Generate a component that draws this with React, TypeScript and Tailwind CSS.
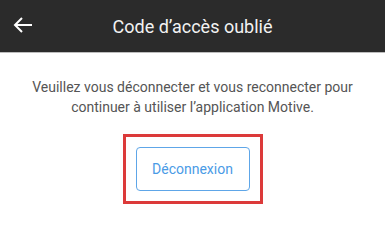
export default function App() {
  return (
    <div className="w-[385px] h-[249px] bg-white flex flex-col font-['Roboto',sans-serif]">
      {/* Header */}
      <div className="h-[52px] bg-[#2b2b2b] flex items-center relative border-b border-[#bdbdbd] box-content">
        <button type="button" className="absolute left-[11px] top-[13px] text-white" aria-label="Retour">
          <svg width="24" height="24" viewBox="0 0 24 24" fill="none" stroke="currentColor" strokeWidth="2">
            <path d="M21 12H4M11 5l-7 7 7 7" />
          </svg>
        </button>
        <h1 className="flex-1 text-center text-[18px] text-[#f2f2f2] font-normal">Code d’accès oublié</h1>
      </div>

      <div className="flex flex-col items-center">
        <p className="mt-[24px] text-[14px] leading-[20px] text-[#555555] text-center px-[14px]">
          Veuillez vous déconnecter et vous reconnecter pour continuer à utiliser l’application Motive.
        </p>
        <div className="mt-[17px] border-[3px] border-[#dc3a3a] w-[140px] h-[70px] flex items-center justify-center">
          <button
            type="button"
            className="w-[114px] h-[44px] border-[1.5px] border-[#5ea6e8] rounded-[4px] text-[14px] text-[#4a9be6]"
          >
            Déconnexion
          </button>
        </div>
      </div>
    </div>
  )
}
